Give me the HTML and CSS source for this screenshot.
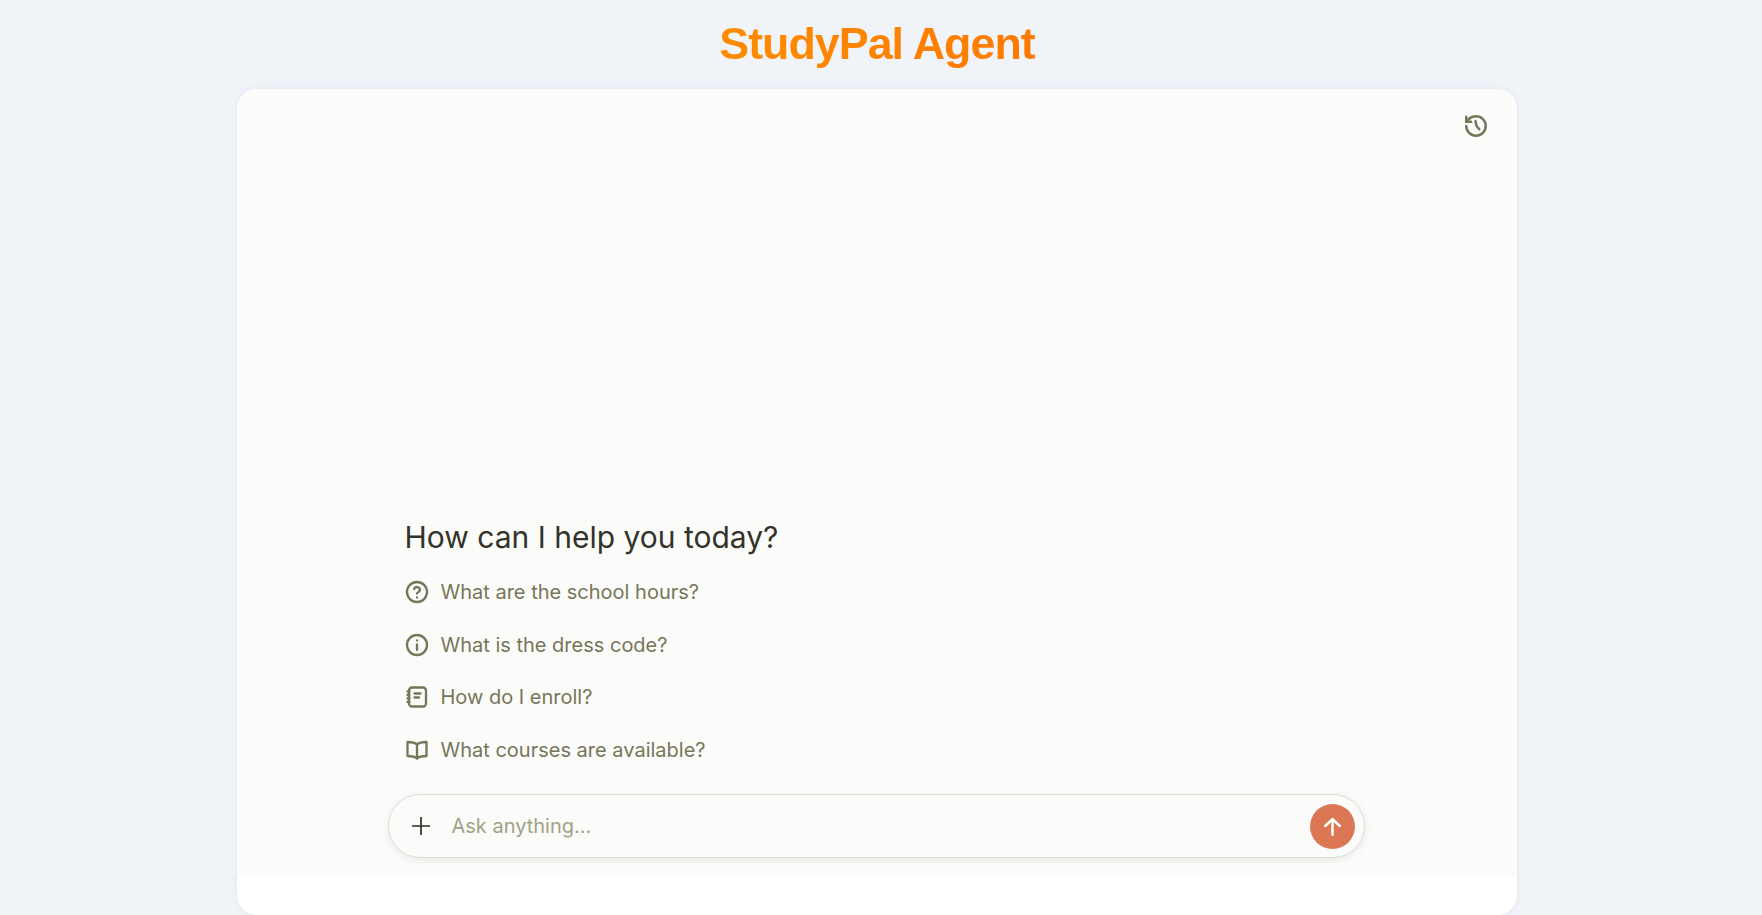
FILE: index.html
```html
<!DOCTYPE html>
<html lang="en">
<head>
    <meta charset="UTF-8">
    <meta name="viewport" content="width=device-width, initial-scale=1.0">
    <title>StudyPal Agent</title>
    <link rel="stylesheet" href="styles.css">
</head>
<body>

    <h1 class="title">StudyPal Agent</h1>

    <div class="card">
        <div class="chat">
            <button class="history-btn" aria-label="History">
                <svg class="icon" viewBox="0 0 24 24">
                    <path d="M3 12a9 9 0 1 0 9-9 9.75 9.75 0 0 0-6.74 2.74L3 8"/>
                    <path d="M3 3.500V8h4.500"/>
                    <path d="M11.500 7.500 12.500 12l2.500 3"/>
                </svg>
            </button>

            <div class="thread">
                <div class="welcome">
                    <h2>How can I help you today?</h2>

                    <div class="suggestion">
                        <svg class="icon" viewBox="0 0 24 24">
                            <circle cx="12" cy="12" r="10"/>
                            <path d="M9.090 9a3 3 0 0 1 5.830 1c0 2-3 2.500-3 3.500"/>
                            <path d="M12 17.500h.01"/>
                        </svg>
                        <span>What are the school hours?</span>
                    </div>

                    <div class="suggestion">
                        <svg class="icon" viewBox="0 0 24 24">
                            <circle cx="12" cy="12" r="10"/>
                            <path d="M12 17v-5.500"/>
                            <path d="M12 7.500h.01"/>
                        </svg>
                        <span>What is the dress code?</span>
                    </div>

                    <div class="suggestion">
                        <svg class="icon" viewBox="0 0 24 24">
                            <path d="M2.500 6.500h2"/>
                            <path d="M2.500 10h2"/>
                            <path d="M2.500 13.500h2"/>
                            <path d="M2.500 17h2"/>
                            <rect x="4" y="2.500" width="17" height="19" rx="3"/>
                            <path d="M9.500 8.500h6"/>
                            <path d="M9.500 12.500h4.500"/>
                        </svg>
                        <span>How do I enroll?</span>
                    </div>

                    <div class="suggestion">
                        <svg class="icon" viewBox="0 0 24 24">
                            <path d="M12 6.500v14"/>
                            <path d="M12 6.500C10.500 5 8 4 2.500 4v14c5.500 0 8 1 9.500 2.500 1.500-1.500 4-2.500 9.500-2.500V4C16 4 13.500 5 12 6.500z"/>
                        </svg>
                        <span>What courses are available?</span>
                    </div>
                </div>

                <div class="composer">
                    <button class="add-btn" aria-label="Add">
                        <svg viewBox="0 0 24 24">
                            <path d="M12 3v18"/>
                            <path d="M3 12h18"/>
                        </svg>
                    </button>
                    <input class="composer-input" type="text" placeholder="Ask anything...">
                    <button class="send-btn" aria-label="Send">
                        <svg viewBox="0 0 24 24">
                            <path d="M12 20V5"/>
                            <path d="M5 11.500 12 5l7 6.500"/>
                        </svg>
                    </button>
                </div>
            </div>
        </div>
    </div>

</body>
</html>
```

FILE: styles.css
```css
* {
    box-sizing: border-box;
}

html, body {
    height: 100%;
}

body {
    margin: 0;
    padding-right: 8px;
    display: flex;
    flex-direction: column;
    align-items: center;
    overflow: hidden;
    background-color: #f0f4f9;
    font-family: Inter, "Liberation Sans", sans-serif;
}

button {
    border: none;
    background: none;
    padding: 0;
    cursor: pointer;
}

.title {
    margin: 0;
    height: 89px;
    padding-top: 16px;
    font-family: "Liberation Sans", Arial, sans-serif;
    font-size: 44.8px;
    line-height: 54px;
    font-weight: 700;
    letter-spacing: -1px;
    background: linear-gradient(90deg, #ff8c00, #ff7a00);
    -webkit-background-clip: text;
    background-clip: text;
    color: transparent;
}

.card {
    flex: 1;
    width: 1280px;
    padding-bottom: 39px;
    display: flex;
    background-color: white;
    border-radius: 20px;
    box-shadow: 0 0 6px rgba(60, 70, 110, 0.08);
    overflow: hidden;
}

.chat {
    position: relative;
    flex: 1;
    display: flex;
    flex-direction: column;
    justify-content: flex-end;
    align-items: center;
    padding: 0 2px 18px 0;
    background-color: #fbfbf9;
}

.icon {
    display: block;
    width: 24px;
    height: 24px;
    flex-shrink: 0;
    fill: none;
    stroke: #76765a;
    stroke-width: 2.3;
    stroke-linecap: round;
    stroke-linejoin: round;
}

.history-btn {
    position: absolute;
    top: 24px;
    right: 28px;
    width: 26px;
    height: 26px;
}

.history-btn .icon {
    width: 26px;
    height: 26px;
}

.thread {
    width: 977px;
}

.welcome {
    padding: 0 17px 18px;
}

.welcome h2 {
    margin: 0 0 7px;
    font-size: 30px;
    line-height: 44px;
    font-weight: 400;
    color: #33332b;
}

.suggestion {
    display: flex;
    align-items: center;
    gap: 12px;
    height: 52.5px;
    font-size: 20px;
    color: #76765a;
}

.composer {
    display: flex;
    align-items: center;
    height: 64px;
    padding: 0 9px 0 20px;
    background-color: #fbfbf9;
    border: 1px solid #dddcd8;
    border-radius: 32px;
    box-shadow: 0 2px 8px rgba(0, 0, 0, 0.08);
}

.add-btn {
    width: 24px;
    height: 24px;
    margin-right: 17px;
}

.add-btn svg {
    display: block;
    fill: none;
    stroke: #2c2c28;
    stroke-width: 1.7;
}

.composer-input {
    flex: 1;
    min-width: 0;
    border: none;
    outline: none;
    background: none;
    font-family: inherit;
    font-size: 20px;
    color: #33332b;
}

.composer-input::placeholder {
    color: #a0a286;
    opacity: 1;
}

.send-btn {
    width: 45px;
    height: 45px;
    padding: 10px;
    border-radius: 50%;
    background-color: #dc7755;
}

.send-btn svg {
    display: block;
    fill: none;
    stroke: white;
    stroke-width: 2.4;
    stroke-linecap: round;
    stroke-linejoin: round;
}
```
